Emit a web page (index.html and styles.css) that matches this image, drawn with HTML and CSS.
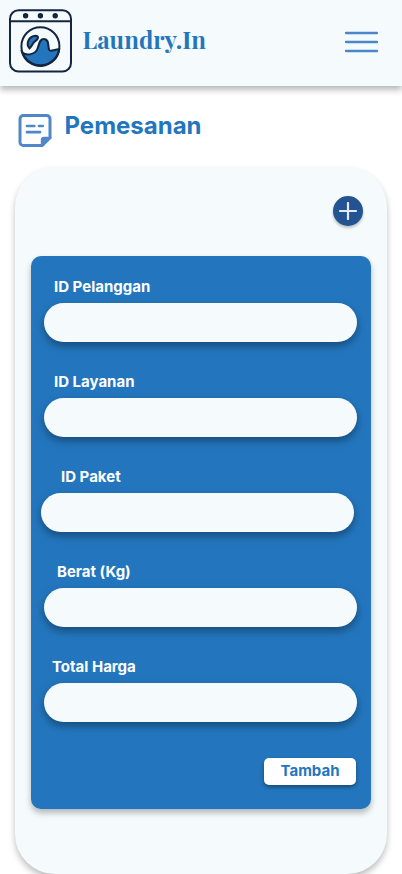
FILE: index.html
```html
<!DOCTYPE html>
<html lang="id">
<head>
<meta charset="utf-8">
<meta name="viewport" content="width=device-width, initial-scale=1">
<title>Laundry.In</title>
<link rel="stylesheet" href="styles.css">
</head>
<body>
<header class="topbar">
  <svg class="logo" width="65" height="64" viewBox="0 0 65 64" fill="none" stroke="#14263f" stroke-width="2">
    <rect x="2" y="1.2" width="61" height="61.3" rx="8.5"/>
    <path d="M2 12.3H63"/>
    <g fill="#14263f" stroke="none"><circle cx="17.6" cy="6.7" r="2.7"/><circle cx="32.4" cy="6.7" r="2.7"/><circle cx="47.2" cy="6.7" r="2.7"/></g>
    <path fill="#2376be" d="M14.2 43.6C19 47.2 27.4 45.5 29.6 39.5C31.4 34.6 31.6 30 35.8 30C41.8 30 39.7 38.6 41.2 41C42.6 43.2 46.5 40.2 51.2 40.3A19 19 0 0 1 14.2 43.6Z"/>
    <path fill="#2376be" d="M21.5 39.4C17.4 34.8 20.8 27 27.6 26.7C31.6 27 30 30.2 27.6 31.8C24.4 33.6 24.6 37 21.5 39.4Z"/>
    <circle cx="32.4" cy="37.2" r="19"/>
  </svg>
  <span class="brand">Laundry.In</span>
  <svg class="menu" width="34" height="22" viewBox="0 0 34 22" fill="none" stroke="#4a86c9" stroke-width="2.3" stroke-linecap="round"><path d="M2 2H33M2 11H33M2 20H33"/></svg>
</header>
<main>
  <div class="heading">
    <svg class="note" width="34" height="34" viewBox="0 0 34 34" fill="none" stroke="#5087c8" stroke-linecap="round">
      <path stroke-width="3" stroke-linejoin="round" d="M24 31.5H5.3A3.3 3.3 0 0 1 2 28.2V4.8A3.3 3.3 0 0 1 5.3 1.5H28.7A3.3 3.3 0 0 1 32 4.8V23.5L24 31.5Z"/>
      <path fill="#5087c8" stroke="none" d="M22.8 33V26A3.3 3.3 0 0 1 26.1 22.7H33.5V24.3L24.7 33Z"/>
      <path stroke-width="2.7" d="M9 12H16.3M21 12H24.7M9 18.2H22"/>
    </svg>
    <h1>Pemesanan</h1>
  </div>
  <section class="card">
    <button class="add" aria-label="Tambah pesanan"><svg width="18" height="18" viewBox="0 0 18 18" fill="none" stroke="#e3eaf3" stroke-width="2.2" stroke-linecap="round"><path d="M9 1V17M1 9H17"/></svg></button>
    <form class="form">
      <div class="field"><label for="pelanggan">ID Pelanggan</label><input id="pelanggan" type="text"></div>
      <div class="field"><label for="layanan">ID Layanan</label><input id="layanan" type="text"></div>
      <div class="field field-paket"><label for="paket">ID Paket</label><input id="paket" type="text"></div>
      <div class="field field-berat"><label for="berat">Berat (Kg)</label><input id="berat" type="text"></div>
      <div class="field field-total"><label for="total">Total Harga</label><input id="total" type="text"></div>
      <button class="submit" type="button">Tambah</button>
    </form>
  </section>
</main>
</body>
</html>
```
FILE: styles.css
```css
* { box-sizing: border-box; }
html { overflow: hidden; }
body {
  margin: 0;
  width: 402px;
  height: 874px;
  overflow: hidden;
  background: #fff;
  font-family: Inter, "Liberation Sans", sans-serif;
}
.topbar {
  display: flex;
  height: 86px;
  padding: 9px 24px 0 8px;
  background: #f5fafd;
  box-shadow: 0 4px 6px rgba(0, 0, 0, .27);
}
.logo { flex: none; }
.brand {
  margin: 15px 0 0 9.5px;
  font: bold 24px/30px "Playfair Display", "Liberation Serif", serif;
  white-space: nowrap;
  color: #2376be;
}
.menu { margin: 22px 0 0 auto; }
.heading {
  display: flex;
  height: 81px;
  padding: 27.5px 0 0 18.5px;
}
.note { margin-left: -.5px; }
h1 {
  margin: -2.5px 0 0 12.5px;
  font-size: 24px;
  line-height: 30px;
  font-weight: 700;
  color: #2376be;
}
.card {
  display: flex;
  flex-direction: column;
  height: 707px;
  margin: 0 15px;
  padding: 28.5px 16px 0;
  border-radius: 40px;
  background: #f5fafd;
  box-shadow: 0 4px 6px rgba(0, 0, 0, .25);
}
.add {
  display: grid;
  place-items: center;
  align-self: flex-end;
  flex: none;
  width: 30px;
  height: 30px;
  margin-right: 8px;
  padding: 0;
  border: 0;
  border-radius: 50%;
  background: #235491;
  box-shadow: 0 2px 3px rgba(0, 0, 0, .25);
}
.form {
  display: flex;
  flex-direction: column;
  flex: none;
  height: 553px;
  margin-top: 30.5px;
  padding: 21px 14px 0 13px;
  border-radius: 10px;
  background: #2376be;
  box-shadow: 0 4px 6px rgba(0, 0, 0, .27);
}
.field { height: 95px; }
.field label {
  display: block;
  height: 26px;
  padding-left: 10px;
  font-size: 15px;
  line-height: 20px;
  font-weight: 700;
  color: #fff;
}
.field input {
  display: block;
  width: 313px;
  height: 39px;
  padding: 0 18px;
  border: 0;
  border-radius: 20px;
  background: #f5fafd;
  box-shadow: 0 4px 8px rgba(0, 0, 0, .36);
}
.field-paket { margin-left: -3px; }
.field-paket label { padding-left: 20px; }
.field-berat label { padding-left: 13px; }
.field-total label { padding-left: 8px; }
.submit {
  align-self: flex-end;
  width: 92px;
  height: 27px;
  margin: 6px 1px 0 0;
  padding: 0 0 1px;
  border: 0;
  border-radius: 5px;
  background: #fff;
  box-shadow: 0 2px 4px rgba(0, 0, 0, .4);
  font: 700 15px/26px Inter, "Liberation Sans", sans-serif;
  color: #2376be;
}
```
